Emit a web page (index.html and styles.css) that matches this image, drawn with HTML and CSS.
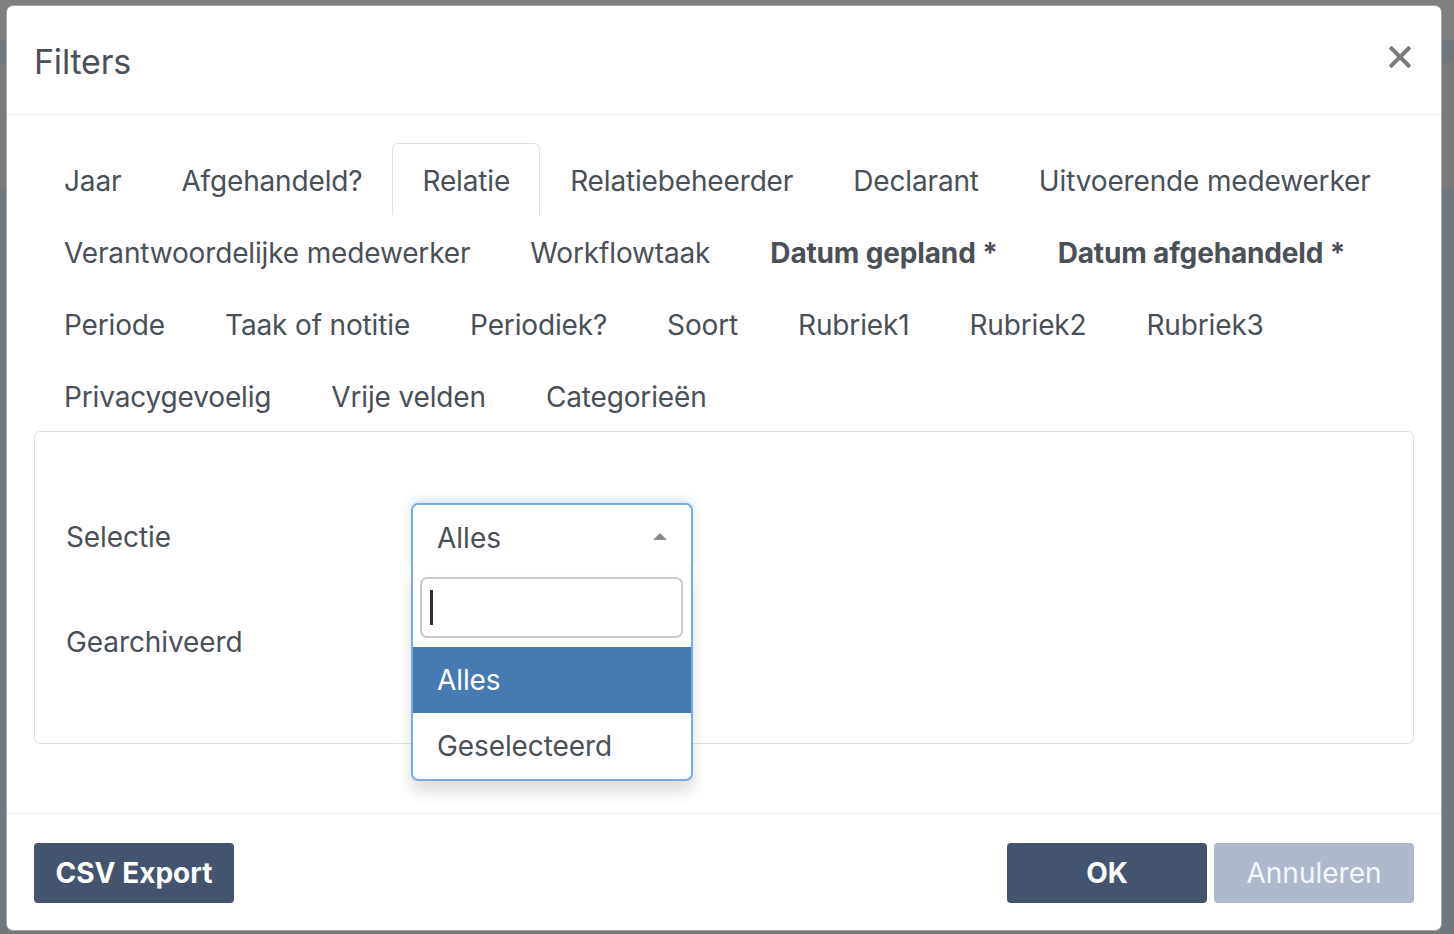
FILE: index.html
```html
<!DOCTYPE html>
<html lang="nl">
<head>
<meta charset="utf-8">
<title>Filters</title>
<link rel="stylesheet" href="styles.css">
</head>
<body>
<div class="modal">
  <div class="modal-header">
    <h1 class="modal-title">Filters</h1>
    <button class="close" aria-label="Sluiten">
      <svg width="22" height="22" viewBox="0 0 22 22"><path d="M2.5 2.5 L19.5 19.5 M19.5 2.5 L2.5 19.5" stroke="#7b7b7b" stroke-width="4" stroke-linecap="square" fill="none"/></svg>
    </button>
  </div>
  <div class="modal-body">
    <ul class="nav-tabs">
      <li class="tab">Jaar</li>
      <li class="tab">Afgehandeld?</li>
      <li class="tab active">Relatie</li>
      <li class="tab">Relatiebeheerder</li>
      <li class="tab">Declarant</li>
      <li class="tab">Uitvoerende medewerker</li>
      <li class="break"></li>
      <li class="tab">Verantwoordelijke medewerker</li>
      <li class="tab">Workflowtaak</li>
      <li class="tab bold">Datum gepland *</li>
      <li class="tab bold">Datum afgehandeld *</li>
      <li class="break"></li>
      <li class="tab">Periode</li>
      <li class="tab">Taak of notitie</li>
      <li class="tab">Periodiek?</li>
      <li class="tab">Soort</li>
      <li class="tab">Rubriek1</li>
      <li class="tab">Rubriek2</li>
      <li class="tab">Rubriek3</li>
      <li class="break"></li>
      <li class="tab">Privacygevoelig</li>
      <li class="tab">Vrije velden</li>
      <li class="tab">Categorieën</li>
    </ul>
    <div class="tab-pane">
      <div class="form-row">
        <label class="form-label">Selectie</label>
        <div class="select-wrap">
          <div class="select open">
            <span class="select-value">Alles</span>
            <span class="arrow"></span>
          </div>
          <div class="dropdown">
            <div class="search"><span class="caret"></span></div>
            <ul class="options">
              <li class="option highlighted">Alles</li>
              <li class="option">Geselecteerd</li>
            </ul>
          </div>
        </div>
      </div>
      <div class="form-row">
        <label class="form-label">Gearchiveerd</label>
      </div>
    </div>
  </div>
  <div class="modal-footer">
    <button class="btn btn-primary">CSV Export</button>
    <div class="footer-right">
      <button class="btn btn-primary">OK</button>
      <button class="btn btn-secondary">Annuleren</button>
    </div>
  </div>
</div>
</body>
</html>
```
FILE: styles.css
```css
* { box-sizing: border-box; }
html, body { margin: 0; padding: 0; }
body {
  width: 1454px;
  height: 934px;
  overflow: hidden;
  font-family: Inter, "Open Sans", sans-serif;
  color: #495057;
  background:
    linear-gradient(#7f7f7f, #7f7f7f) 0 0 / 100% 40px no-repeat,
    linear-gradient(#797a7c, #797a7c) 0 63px / 100% 125px no-repeat,
    #6f767c;
  padding: 5px 12px 3px 6px;
}
.modal {
  width: 1436px;
  height: 926px;
  background: #fff;
  border: 1px solid rgba(0,0,0,0.35);
  border-radius: 7px;
  display: flex;
  flex-direction: column;
}
.modal-header {
  height: 109px;
  border-bottom: 1px solid #e9ecef;
  display: flex;
  align-items: center;
  justify-content: space-between;
  padding: 2px 30px 0 27px;
}
.modal-title {
  margin: 0;
  font-size: 34px;
  font-weight: 400;
  color: #495057;
  letter-spacing: -0.2px;
}
.close {
  border: 0;
  background: none;
  padding: 0;
  margin-top: -9px;
  width: 22px;
  height: 22px;
  display: flex;
}
.modal-body {
  flex: 1;
  padding: 28px 27px 0 27px;
}
.nav-tabs {
  list-style: none;
  margin: 0;
  padding: 0;
  display: flex;
  flex-wrap: wrap;
}
.tab {
  height: 72px;
  padding: 0 29px;
  font-size: 28px;
  line-height: 75px;
  border: 1px solid transparent;
  border-bottom: 0;
  border-radius: 6px 6px 0 0;
  white-space: nowrap;
  letter-spacing: -0.15px;
}
.tab.active {
  border-color: #dee2e6;
}
.tab.bold { font-weight: 700; }
.break { flex-basis: 100%; height: 0; }
.tab-pane {
  border: 1px solid #dee2e6;
  border-radius: 6px;
  height: 313px;
  padding: 71px 31px 0 31px;
  display: flex;
  flex-direction: column;
  gap: 38px;
}
.form-row {
  display: flex;
  align-items: center;
  height: 67px;
}
.form-label {
  width: 345px;
  font-size: 28px;
  letter-spacing: -0.1px;
  padding-top: 1px;
}
.select-wrap {
  position: relative;
  width: 282px;
  height: 67px;
}
.select {
  height: 67px;
  border: 2px solid #76abe6;
  border-bottom: 0;
  border-radius: 7px 7px 0 0;
  display: flex;
  align-items: center;
  justify-content: space-between;
  padding: 1px 24px 0 24px;
  font-size: 28px;
  box-shadow: 0 -3px 10px rgba(120,170,230,0.35);
  background: #fff;
}
.arrow {
  width: 0; height: 0;
  border-left: 7px solid transparent;
  border-right: 7px solid transparent;
  border-bottom: 7px solid #888;
  margin-top: -3px;
}
.dropdown {
  position: absolute;
  left: 0;
  top: 67px;
  width: 282px;
  background: #fff;
  border: 2px solid #76abe6;
  border-top: 0;
  border-radius: 0 0 7px 7px;
  box-shadow: 0 10px 16px rgba(0,0,0,0.14);
  z-index: 5;
  padding-top: 7px;
}
.search {
  margin: 0 8px 9px 7px;
  height: 61px;
  border: 2px solid #cacaca;
  border-radius: 7px;
  display: flex;
  align-items: center;
  padding-left: 8px;
}
.caret {
  width: 3px;
  height: 35px;
  background: #333;
}
.options {
  list-style: none;
  margin: 0;
  padding: 0;
}
.option {
  height: 66px;
  line-height: 66px;
  padding-left: 24px;
  font-size: 28px;
  letter-spacing: -0.1px;
}
.option.highlighted {
  background: #467ab3;
  color: #fff;
}
.modal-footer {
  height: 117px;
  border-top: 1px solid #e9ecef;
  padding: 29px 27px 0 27px;
  display: flex;
  justify-content: space-between;
  align-items: flex-start;
}
.footer-right { display: flex; gap: 7px; }
.btn {
  width: 200px;
  height: 60px;
  border: 0;
  border-radius: 4px;
  font-family: inherit;
  font-size: 28px;
  color: #fff;
  padding: 0;
}
.btn-primary { background: #44546f; font-weight: 700; }
.btn-secondary { background: #aeb9cb; color: #f4f6f9; font-weight: 400; }
```
